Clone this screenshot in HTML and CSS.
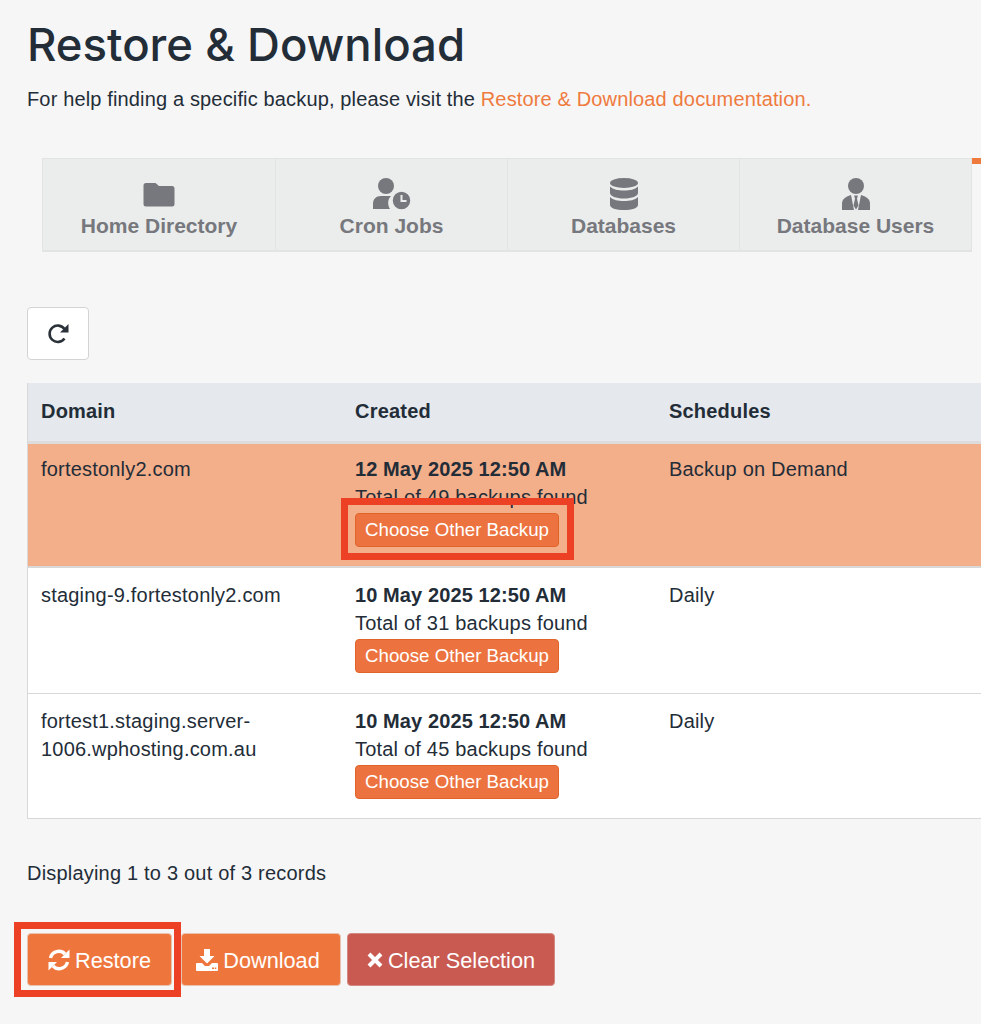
FILE: index.html
```html
<!DOCTYPE html>
<html lang="en">
<head>
<meta charset="utf-8">
<title>Restore &amp; Download</title>
<link rel="stylesheet" href="styles.css">
</head>
<body>
<main class="page">
  <h1 class="title">Restore &amp; Download</h1>
  <p class="intro">For help finding a specific backup, please visit the <a class="link" href="#">Restore &amp; Download documentation.</a></p>

  <div class="tabs-wrap">
    <nav class="tabs">
      <div class="tab">
        <svg class="tab-icon" width="32" height="32" viewBox="0 0 32 32"><path d="M3 5h9.500l3.500 3h13a2.500 2.500 0 0 1 2.500 2.500V26a2.500 2.500 0 0 1-2.500 2.500H3A2.500 2.500 0 0 1 .5 26V7.500A2.500 2.500 0 0 1 3 5z" fill="#76787d"/></svg>
        <span>Home Directory</span>
      </div>
      <div class="tab">
        <svg class="tab-icon" width="40" height="32" viewBox="0 0 40 32"><circle cx="14" cy="8" r="8" fill="#76787d"/><path d="M1 31v-5c0-5 3-8 8-8h10c-3 3-4 8-1 13z" fill="#76787d"/><circle cx="29.500" cy="22.500" r="9.500" fill="#76787d" stroke="#ebecec" stroke-width="1.500"/><path d="M29.500 17v6h5" fill="none" stroke="#ebecec" stroke-width="2"/></svg>
        <span>Cron Jobs</span>
      </div>
      <div class="tab">
        <svg class="tab-icon" width="28" height="32" viewBox="0 0 28 32"><ellipse cx="14" cy="5" rx="14" ry="5" fill="#76787d"/><path d="M0 8.500c3 3 8 4 14 4s11-1 14-4V15c0 3-6 5.500-14 5.500S0 18 0 15z" fill="#76787d"/><path d="M0 19c3 3 8 4 14 4s11-1 14-4v8c0 3-6 5-14 5S0 30 0 27z" fill="#76787d"/></svg>
        <span>Databases</span>
      </div>
      <div class="tab">
        <svg class="tab-icon" width="28" height="32" viewBox="0 0 28 32"><circle cx="14" cy="8" r="8" fill="#76787d"/><path d="M0 32v-6c0-5 3-7 9-9l3 15zM28 32v-6c0-5-3-7-9-9l-3 15zM12 17.500h4l-1 3 1.500 7-2.500 4-2.500-4 1.500-7z" fill="#76787d"/></svg>
        <span>Database Users</span>
      </div>
    </nav>
    <span class="tab-marker"></span>
  </div>

  <button class="refresh" type="button" aria-label="Refresh">
    <svg width="22" height="22" viewBox="0 0 22 22"><path d="M17.500 15.500A8.200 8.200 0 1 1 17.500 6" fill="none" stroke="#2b3138" stroke-width="2.600"/><path d="M21.500 1v8.500H13z" fill="#2b3138"/></svg>
  </button>

  <div class="table">
    <div class="row head">
      <div class="cell">Domain</div>
      <div class="cell">Created</div>
      <div class="cell">Schedules</div>
    </div>
    <div class="row selected">
      <div class="cell">fortestonly2.com</div>
      <div class="cell">
        <strong class="date">12 May 2025 12:50 AM</strong>
        <div class="count">Total of 49 backups found</div>
        <button class="choose" type="button">Choose Other Backup</button>
      </div>
      <div class="cell">Backup on Demand</div>
    </div>
    <div class="row">
      <div class="cell">staging-9.fortestonly2.com</div>
      <div class="cell">
        <strong class="date">10 May 2025 12:50 AM</strong>
        <div class="count">Total of 31 backups found</div>
        <button class="choose" type="button">Choose Other Backup</button>
      </div>
      <div class="cell">Daily</div>
    </div>
    <div class="row">
      <div class="cell">fortest1.staging.server-<br>1006.wphosting.com.au</div>
      <div class="cell">
        <strong class="date">10 May 2025 12:50 AM</strong>
        <div class="count">Total of 45 backups found</div>
        <button class="choose" type="button">Choose Other Backup</button>
      </div>
      <div class="cell">Daily</div>
    </div>
  </div>

  <p class="records">Displaying 1 to 3 out of 3 records</p>

  <div class="actions">
    <button class="btn btn-orange btn-restore" type="button">
      <svg width="22" height="22" viewBox="0 0 22 22"><path d="M2.500 9A8.500 8.500 0 0 1 17 5" fill="none" stroke="#fff" stroke-width="3.400"/><path d="M21.500 .5V9H13z" fill="#fff"/><path d="M19.500 13A8.500 8.500 0 0 1 5 17" fill="none" stroke="#fff" stroke-width="3.400"/><path d="M.5 21.500V13H9z" fill="#fff"/></svg>
      <span class="btn-label">Restore</span>
    </button>
    <button class="btn btn-orange btn-download" type="button">
      <svg width="22" height="22" viewBox="0 0 22 22"><path d="M8 0h6v7h4.500L11 14.500 3.500 7H8z" fill="#fff"/><path d="M1 14h5l3 3h4l3-3h5a1 1 0 0 1 1 1v6a1 1 0 0 1-1 1H1a1 1 0 0 1-1-1v-6a1 1 0 0 1 1-1z" fill="#fff"/><path d="M16 18.500h2v1.500h-2zM18.800 18.500h1.500v1.500h-1.500z" fill="#ee763d"/></svg>
      <span class="btn-label">Download</span>
    </button>
    <button class="btn btn-red" type="button">
      <svg width="16" height="16" viewBox="0 0 16 16"><path d="M2 2l12 12M14 2L2 14" fill="none" stroke="#fff" stroke-width="4"/></svg>
      <span class="btn-label">Clear Selection</span>
    </button>
  </div>
</main>
<div class="callout callout-choose"></div>
<div class="callout callout-restore"></div>
</body>
</html>
```

FILE: styles.css
```css
* { box-sizing: border-box; }
html, body { margin: 0; padding: 0; height: 1024px; overflow: hidden; }
body {
  position: relative;
  background: #f6f6f6;
  color: #232d38;
  font-family: "Liberation Sans", Arial, sans-serif;
  font-size: 20px;
  letter-spacing: 0.2px;
}
.page { padding: 0 0 0 27px; width: 1100px; }
.title {
  margin: 0;
  padding-top: 17px;
  font-family: Inter, "Liberation Sans", sans-serif;
  font-size: 45.5px;
  line-height: 56px;
  font-weight: 550;
  letter-spacing: 0;
  color: #232d38;
}
.intro { margin: 12px 0 0; line-height: 28px; letter-spacing: 0.15px; }
.link { color: #ef7a3e; text-decoration: none; }

.tabs-wrap { display: flex; align-items: flex-start; margin: 45px 0 0 15px; }
.tabs {
  display: grid;
  grid-template-columns: 233px 232px 232px 231px;
  width: 930px;
  height: 94px;
  background: #ebecec;
  border: 1px solid #e2e3e3;
  border-bottom-width: 2px;
}
.tab {
  display: flex;
  flex-direction: column;
  align-items: center;
  justify-content: flex-end;
  padding-bottom: 12px;
  border-right: 1px solid #e2e3e3;
  color: #76787d;
  font-weight: 700;
  font-size: 21px;
  letter-spacing: 0;
  line-height: 24px;
}
.tab:last-child { border-right: 0; }
.tab-icon { display: block; margin-bottom: 4px; }
.tab-marker { width: 10px; height: 6px; background: #ef7a3e; }

.refresh {
  display: flex;
  align-items: center;
  justify-content: center;
  margin-top: 55px;
  width: 62px;
  height: 53px;
  background: #fff;
  border: 1px solid #d4d4d4;
  border-radius: 4px;
  padding: 0;
}

.table { margin-top: 23px; border-left: 1px solid #d8d8d8; }
.row {
  display: grid;
  grid-template-columns: 314px 314px 460px;
  height: 126px;
  background: #fff;
  border-bottom: 1px solid #d8d8d8;
  line-height: 28px;
}
.row:last-child { height: 125px; }
.cell { padding: 13px 13px 0; }
.row.head {
  height: 61px;
  background: #e5e8ed;
  border-bottom: 3px solid #dcdcdc;
  font-weight: 700;
}
.row.head .cell { padding-top: 14px; }
.row.selected { height: 124px; background: #f3ae8a; border-bottom: 2px solid #d8d8d8; }
.row.selected .cell { padding-top: 11px; }
.date { display: block; font-weight: 700; letter-spacing: 0.1px; }
.choose {
  display: block;
  margin-top: 2px;
  height: 34px;
  width: 204px;
  padding: 0;
  background: #ec7340;
  border: 1px solid #e0642a;
  border-radius: 4px;
  color: #fff;
  font: inherit;
  font-size: 18.7px;
  letter-spacing: 0;
}

.records { margin: 40px 0 0; line-height: 28px; }

.actions { display: flex; gap: 6px; margin-top: 46px; }
.btn {
  display: inline-flex;
  align-items: center;
  justify-content: center;
  gap: 5px;
  height: 53px;
  padding: 0;
  border-radius: 4px;
  color: #fff;
  font: inherit;
  font-size: 21.700px;
  letter-spacing: 0;
}
.btn-label { position: relative; top: 1px; }
.btn-orange { background: #ee763d; border: 1px solid #e8c2ae; }
.btn-red { background: #c85a52; border: 1px solid #d48a84; width: 208px; }
.btn-restore { width: 145px; margin-right: 3px; }
.btn-download { width: 160px; padding-right: 6px; }

.callout { position: absolute; border: 7px solid #ec4125; }
.callout-choose { left: 341px; top: 498px; width: 233px; height: 62px; }
.callout-restore { left: 14px; top: 922px; width: 167px; height: 75px; }
```
